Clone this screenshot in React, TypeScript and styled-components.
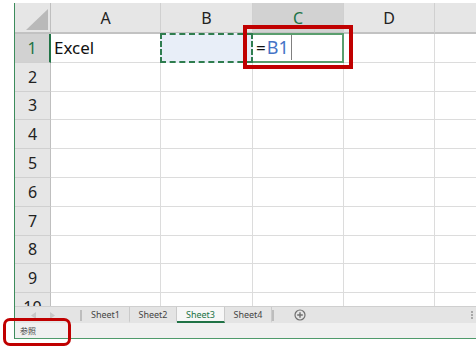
import React from "react";
import styled, { createGlobalStyle } from "styled-components";

const GlobalStyle = createGlobalStyle`
  html, body {
    margin: 0;
    padding: 0;
    background: #ffffff;
  }
  body {
    font-family: "Noto Sans", "Noto Sans CJK JP", sans-serif;
  }
`;

const GREEN = "#217346";
const SOFT_GREEN = "#5a9e6e";
const RED = "#c00000";

const Page = styled.div`
  position: relative;
  width: 476px;
  height: 350px;
  padding-top: 3px;
  box-sizing: border-box;
  overflow: hidden;
  background: #ffffff;
`;

const Window = styled.div`
  margin-left: 14px;
  width: 462px;
  border-left: 1px solid #3d8c5c;
  border-bottom: 1px solid #4f9a6b;
  display: flex;
  flex-direction: column;
`;

const Sheet = styled.div`
  height: 303px;
  overflow: hidden;
  display: grid;
  grid-template-columns: 36px 110px 92px 91px 91px 1fr;
  grid-template-rows: 31px repeat(10, 28.8px);
`;

const Corner = styled.div`
  background: #e6e6e6;
  border-right: 1px solid #bfbfbf;
  border-bottom: 2px solid #c2c2c2;
  box-sizing: border-box;
  display: flex;
  align-items: flex-end;
  justify-content: flex-end;
  padding: 0 2px 2px 0;
`;

const ColHead = styled.div<{ $selected?: boolean }>`
  box-sizing: border-box;
  background: ${(p) => (p.$selected ? "#d2d2d2" : "#e6e6e6")};
  color: ${(p) => (p.$selected ? GREEN : "#222222")};
  border-right: 1px solid #d0d0d0;
  border-bottom: 2px solid #c2c2c2;
  display: flex;
  align-items: center;
  justify-content: center;
  font-size: 16px;
`;

const RowHead = styled.div<{ $selected?: boolean }>`
  box-sizing: border-box;
  background: ${(p) => (p.$selected ? "#d2d2d2" : "#e6e6e6")};
  color: ${(p) => (p.$selected ? GREEN : "#222222")};
  border-right: ${(p) => (p.$selected ? `2px solid ${GREEN}` : "1px solid #bfbfbf")};
  border-bottom: 1px solid #d0d0d0;
  display: flex;
  align-items: center;
  justify-content: center;
  font-size: 16px;
`;

const Cell = styled.div<{ $kind?: "plain" | "copy" | "active" }>`
  box-sizing: border-box;
  display: flex;
  align-items: center;
  padding-left: 3px;
  font-size: 17px;
  color: #111111;
  border-right: 1px solid #dcdcdc;
  border-bottom: 1px solid #dcdcdc;
  ${(p) =>
    p.$kind === "copy" &&
    `
    margin: -1px 0 0 -1px;
    background: #e8eef8;
    border: 2px dashed #2f7d4f;
  `}
  ${(p) =>
    p.$kind === "active" &&
    `
    margin-top: -1px;
    border: 2px solid ${SOFT_GREEN};
    border-left: none;
    padding-left: 3px;
  `}
`;

const Equals = styled.span`
  color: #111111;
  margin-right: 1px;
`;

const Ref = styled.span`
  color: #4573c6;
  font-size: 18px;
  padding-right: 2px;
  border-right: 1px solid #808080;
  line-height: 25px;
`;

const TabBar = styled.div`
  height: 17px;
  box-sizing: border-box;
  display: flex;
  align-items: stretch;
  background: #e4e4e4;
  border-top: 1px solid #cfcfcf;
`;

const Nav = styled.div`
  width: 65px;
  box-sizing: border-box;
  display: flex;
  align-items: center;
  gap: 14px;
  padding-left: 16px;
`;

const Divider = styled.div`
  width: 2px;
  align-self: center;
  height: 11px;
  background: #bdbdbd;
`;

const Tab = styled.div<{ $active?: boolean; $w: number }>`
  width: ${(p) => p.$w}px;
  box-sizing: border-box;
  display: flex;
  align-items: center;
  justify-content: center;
  font-size: 9px;
  color: ${(p) => (p.$active ? GREEN : "#444444")};
  background: ${(p) => (p.$active ? "#f7f7f7" : "transparent")};
  border-right: 1px solid #cacaca;
  border-bottom: 2px solid ${(p) => (p.$active ? GREEN : "transparent")};
`;

const AddSheet = styled.div`
  display: flex;
  align-items: center;
  margin-left: 20px;
`;

const Grip = styled.div`
  margin-left: auto;
  margin-right: 4px;
  display: flex;
  flex-direction: column;
  justify-content: center;
  gap: 1px;
`;

const GripDot = styled.span`
  width: 2px;
  height: 2px;
  background: #a8a8a8;
`;

const StatusBar = styled.div`
  height: 15px;
  display: flex;
  align-items: center;
  padding-left: 5px;
  background: #f0f0f0;
  font-family: "Noto Sans CJK JP", sans-serif;
  font-size: 8px;
  color: #444444;
`;

const CellCallout = styled.div`
  position: absolute;
  left: 243px;
  top: 25px;
  width: 110px;
  height: 44px;
  box-sizing: border-box;
  border: 4px solid ${RED};
  pointer-events: none;
`;

const StatusCallout = styled.div`
  position: absolute;
  left: 3px;
  top: 318px;
  width: 68px;
  height: 28px;
  box-sizing: border-box;
  border: 3px solid ${RED};
  border-radius: 7px;
  pointer-events: none;
`;

const columns = ["A", "B", "C", "D", ""];
const rows = [1, 2, 3, 4, 5, 6, 7, 8, 9, 10];
const tabs = [
  { name: "Sheet1", w: 48 },
  { name: "Sheet2", w: 47 },
  { name: "Sheet3", w: 48, active: true },
  { name: "Sheet4", w: 47 },
];

function CellContent({ row, col }: { row: number; col: number }) {
  if (row === 1 && col === 0) return <Cell>Excel</Cell>;
  if (row === 1 && col === 1) return <Cell $kind="copy" />;
  if (row === 1 && col === 2)
    return (
      <Cell $kind="active">
        <Equals>=</Equals>
        <Ref>B1</Ref>
      </Cell>
    );
  return <Cell />;
}

export default function App() {
  return (
    <Page>
      <GlobalStyle />
      <Window>
        <Sheet>
          <Corner>
            <svg width="22" height="21" viewBox="0 0 22 21">
              <polygon points="0,21 22,21 22,0" fill="#b9b9b9" />
            </svg>
          </Corner>
          {columns.map((c) => (
            <ColHead key={c || "E"} $selected={c === "C"}>
              {c}
            </ColHead>
          ))}
          {rows.map((r) => (
            <React.Fragment key={r}>
              <RowHead $selected={r === 1}>{r}</RowHead>
              {columns.map((_, ci) => (
                <CellContent key={ci} row={r} col={ci} />
              ))}
            </React.Fragment>
          ))}
        </Sheet>
        <TabBar>
          <Nav>
            <svg width="5" height="7" viewBox="0 0 5 7">
              <polygon points="5,0 0,3.5 5,7" fill="#c8c8c8" />
            </svg>
            <svg width="5" height="7" viewBox="0 0 5 7">
              <polygon points="0,0 5,3.5 0,7" fill="#c8c8c8" />
            </svg>
          </Nav>
          <Divider />
          {tabs.map((t) => (
            <Tab key={t.name} $w={t.w} $active={t.active}>
              {t.name}
            </Tab>
          ))}
          <Divider />
          <AddSheet>
            <svg width="12" height="12" viewBox="0 0 12 12">
              <circle cx="6" cy="6" r="5" fill="none" stroke="#707070" strokeWidth="1.2" />
              <path d="M6 3.2v5.6M3.2 6h5.6" stroke="#707070" strokeWidth="1.4" />
            </svg>
          </AddSheet>
          <Grip>
            <GripDot />
            <GripDot />
            <GripDot />
          </Grip>
        </TabBar>
        <StatusBar>参照</StatusBar>
      </Window>
      <CellCallout />
      <StatusCallout />
    </Page>
  );
}
